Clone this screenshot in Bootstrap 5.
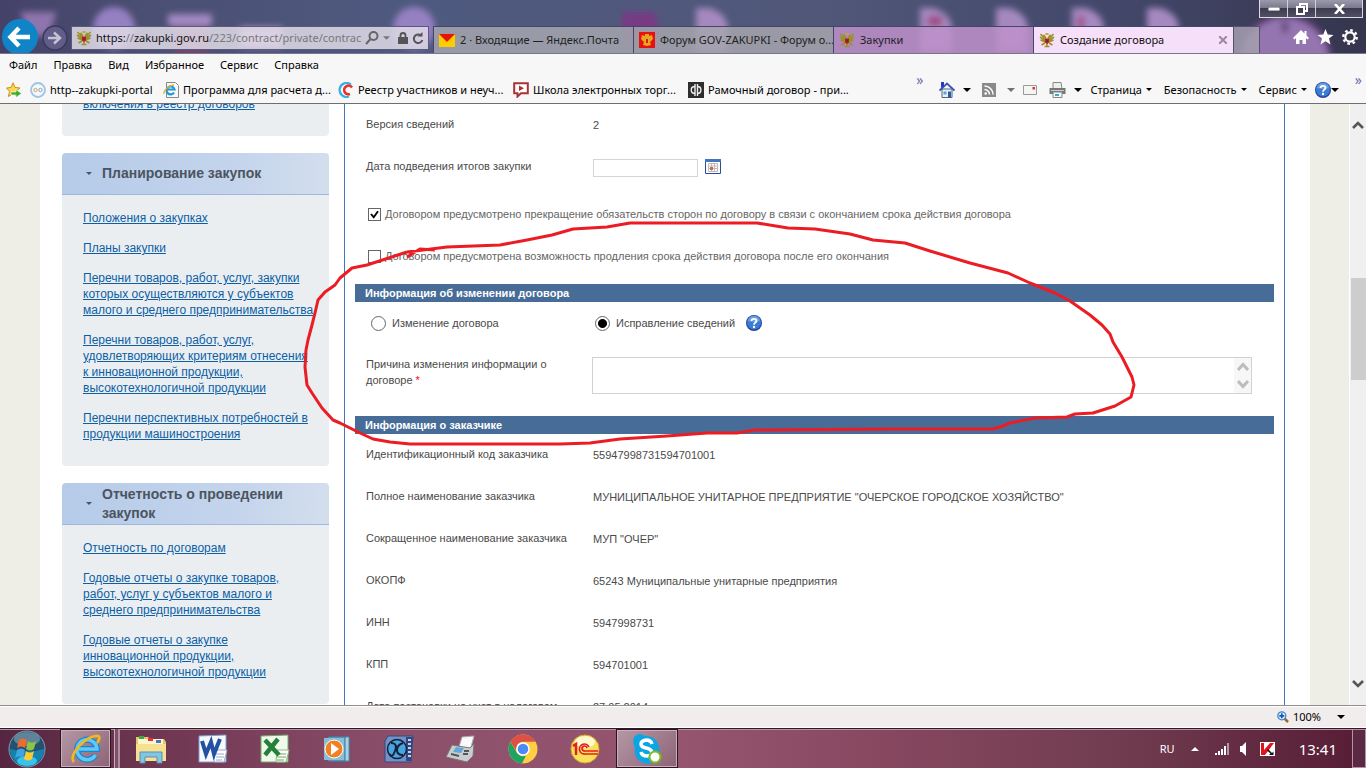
<!DOCTYPE html>
<html lang="ru">
<head>
<meta charset="utf-8">
<meta name="viewport" content="width=device-width, initial-scale=1">
<title>Создание договора</title>
<link href="https://cdn.jsdelivr.net/npm/bootstrap@5.3.0/dist/css/bootstrap.min.css" rel="stylesheet">
<style>
:root{--ui:"Noto Sans","Open Sans",sans-serif;--doc:"Liberation Sans",Arial,sans-serif}
body{font:11px/16px var(--ui);color:#000;background:#fff}
button{font:inherit;color:inherit;background:none;border:0;padding:0}
svg{display:block;flex:none}
.gap-after{margin-right:11px}
.gap-before{margin-left:11px}
/* title bar */
.titlebar{height:54px;background:linear-gradient(90deg,#45426a 0,#4a4e72 10%,#4f5a80 30%,#505779 60%,#44496c 80%,#35354d 100%);border-bottom:1px solid #77768f;overflow:hidden}
.blobs{inset:0;width:100%;height:54px}
.nav-back{margin-left:2px;width:36px;height:34px}
.nav-fwd{width:26px;height:30px;margin-left:4px}
.addr{width:358px;height:24px;margin:0 4px 3px 3px;background:rgba(224,220,232,.85);border:1px solid #5b5a7d;padding:0 4px;gap:4px;color:#777}
.addr .url{width:266px;white-space:nowrap}
.addr .url b{font-weight:400;color:#111}
.tabs{height:27px}
.tab-item{width:200px;border:1px solid #45456a;border-bottom:0;border-right:0;background:rgba(166,166,174,.85);color:#222;padding:0 8px 0 5px;gap:5px;white-space:nowrap}
.tab-item.violet{background:rgba(190,144,202,.85)}
.tab-item.current{background:#f6dff8;color:#111;padding-right:6px}
.tab-new{width:27px;background:rgba(165,160,175,.85);border:1px solid #55526f;border-bottom:0}
.winbtns{top:0;right:3px;border:1px solid #dcdbe4;border-top:0;height:18px;background:linear-gradient(#9b99ac,#7b7a8d 45%,#3e3b4f 50%,#525066)}
.winbtns button{width:28px;border-right:1px solid #cfcfda;display:flex;align-items:center;justify-content:center}
.winbtns button:last-child{width:46px;border:0}
.tools{gap:8px;height:32px;margin-right:8px}
/* menus */
.chrome-bars{background:#f7f7f7;border-bottom:1px solid #6f6f73;height:50px}
.menubar{height:22px;padding-left:9px;gap:16px}
.favbar{height:27px;padding-left:6px}
.fav{width:175px;gap:4px;color:#000;text-decoration:none;white-space:nowrap}
.fav.first{width:133px}
.chev{font-size:14px;line-height:8px;color:#6e6ea8;align-self:flex-start}
.cmds{white-space:nowrap;height:27px}
/* page */
.viewport{min-height:0;background:#eeeee6;font-family:var(--doc)}
.sheet{background:#fff;margin-left:40px;margin-right:39px;padding-left:22px;padding-right:25px}
.side{width:267px;margin-right:15px}
.side-top{margin-top:-8px}
.side-body{background:#ebeef1;padding:15px 0 24px 21px;border-radius:0 0 4px 4px;margin-bottom:17px;display:flex;flex-direction:column;gap:14px;font-size:12px;white-space:nowrap}
.side-top .side-body{padding-top:0}
.side-body a{color:#0b5fa5}
.side-head{height:42px;border-bottom:1px solid #9db7dd;border-radius:4px 4px 0 0;background:linear-gradient(90deg,#b5cbe9,#c4d4ec 65%,#d3deed);padding-left:24px;color:#4b5560}
.side-head h2{font:bold 14px/19px var(--doc);margin:0 0 0 10px}
.form-pane{border:solid #4576b5;border-width:0 1px;padding:0 10px;font-size:11px;color:#4a4a4a}
.f-row{min-height:42px;padding:12px 22px 0 11px}
.f-row>:first-child{width:227px;flex:none;padding-right:20px}
.f-row output{margin-top:1px}
.f-row.reason{min-height:72px}
.star{color:#f00}
.sect{background:#486c98;color:#fff;font:bold 11px/18px var(--doc);margin:0;padding-left:10px}
.f-check{height:42px;padding:10px 0 0 13px;color:#666}
.checks{padding-bottom:12px}
.form-check-input.box{width:13px;height:13px;margin:0 4px 0 0;border:1px solid #666;border-radius:0;background-color:#fff;flex:none}
.form-check-input.box:checked{background-color:#fff;background-size:11px;background-image:url("data:image/svg+xml,%3Csvg xmlns='http://www.w3.org/2000/svg' viewBox='0 0 11 11'%3E%3Cpath d='M2 5l2.700 3.300L9 2.300' fill='none' stroke='%23000' stroke-width='1.900'/%3E%3C/svg%3E")}
.form-check-input.dot{width:15px;height:15px;margin:0 6px 0 0;border:1px solid #666;background-color:#fff;flex:none}
.form-check-input.dot:checked{background-color:#fff;background-image:radial-gradient(circle,#000 0 4px,transparent 5px)}
.radios{height:42px;padding-left:16px}
.radios>:first-child{width:224px}
.date{width:105px;height:18px;border:1px solid #d5d5d5;margin:1px 7px 0 0;padding:0}
.reason-box{border:1px solid #d2d2d2;height:37px;margin:1px 0 0 -1px}
.reason-box textarea{border:0;resize:none;padding:2px;outline:0;overflow:hidden}
.mini-scroll{width:17px;background:#f7f7f7}
.scroll{width:17px;background:#f0f0f0;border-left:1px solid #fff;padding:16px 0}
.thumb{background:#cdcdcd;height:102px;width:15px;margin-top:149px}
.mark-up{left:0;top:0;pointer-events:none}
/* bottom bars */
.statusbar{height:23px;background:#f0edec;border-top:1px solid #8f8f8f;border-bottom:1px solid #fff;box-shadow:inset 0 1px #fff;padding-right:21px}
.taskbar{height:40px;border-top:1px solid #35172a;box-shadow:inset 0 1px #b892a6;background:linear-gradient(90deg,#562640,#743a55 14%,#8c506b 30%,#96556f 50%,#86475f 65%,#713c50 82%,#561c35)}
.task{width:62px;display:flex;align-items:center;justify-content:center}
.task.start{width:58px;padding-right:4px}
.task.on{border:1px solid #2d1422;box-shadow:inset 0 0 0 1px #c9afbd;background:linear-gradient(135deg,#b598a6,#8d6375)}
.task.on.stack{width:51px;margin:0 3px 0 2px}
.stack-edge{width:6px;border-left:1px solid #c9afbd;border-right:2px solid #b18d9f;background:#7d5266}
.tray{color:#fff;margin-right:15px}
.clock{font-size:15px}
.peek{width:14px;border:1px solid #b592a4;background:#5b2a42}
</style>
</head>
<body class="vh-100 overflow-hidden d-flex flex-column">
<svg width="0" height="0" class="position-absolute" aria-hidden="true">
 <symbol id="eagle" viewBox="0 0 16 16"><g fill="none" stroke="#9a9128" stroke-width="1.600"><path d="M7 8L1.500 2M6.500 9L1 5M6.500 10L1.500 8M9 8l5.500-6M9.500 9L15 5M9.500 10l5-2M6 11l-3.500 2M10 11l3.500 2M8 11v4M5.500 14.500h5"/><path d="M7 6L5 3.500 3.800 5M9 6l2-2.500L12.200 5"/></g><path d="M6.500 1h3v2h-3z" fill="#c4aa2a"/><path d="M6 6.500h4v4L8 12l-2-1.500z" fill="#c01c1c"/><path d="M7.500 7.500H9V10H7.500z" fill="#5a2b4b"/></symbol>
 <symbol id="caret" viewBox="0 0 8 4"><path d="M0 0h8L4 4z" fill="currentColor"/></symbol>
 <symbol id="help" viewBox="0 0 16 16"><circle cx="8" cy="8" r="8" fill="#27459b"/><circle cx="8" cy="7.500" r="7" fill="#3b7bd1"/><path d="M2 6a6 5 0 0 1 12 0Q8 8 2 6z" fill="#6a9fe0"/><path d="M5.500 6Q5.500 3.800 8 3.800T10.500 6C10.500 7.500 8 7.700 8 9.700" fill="none" stroke="#fff" stroke-width="1.800"/><circle cx="8" cy="12" r="1.200" fill="#fff"/></symbol>
</svg>

<header class="titlebar position-relative flex-shrink-0">
 <svg class="blobs position-absolute" aria-hidden="true"><defs><filter id="soft"><feGaussianBlur stdDeviation="3"/></filter></defs><g filter="url(#soft)">
  <path d="M20 12h36q-4 20-12 24H30z" fill="#8f74ad"/><circle cx="114" cy="28" r="21" fill="#9580c2"/><path d="M168 14h44v12h-44z" fill="#a389c2"/><path d="M174 26h34v28h-34z" fill="#7b456c"/><path d="M240 27h42v20h-42z" fill="#b895cd"/><circle cx="414" cy="28" r="21" fill="#9580c2"/>
  <path d="M622 12h32l4 10v16h-36z" fill="#773b84"/><path d="M696 8h14q18 6 18 22v22h-32zM920 8h14q18 6 18 22v22h-32zM996 8h14q18 6 18 22v22h-32zM1072 8h14q18 6 18 22v22h-32zM1147 8h14q18 6 18 22v22h-32z" fill="#a588bf"/><path d="M928 16h14v10h-14zM1078 16h6v20h-6z" fill="#a04683"/>
  <circle cx="1285" cy="62" r="46" fill="#9474b0" stroke="#5c3870" stroke-width="4"/><path d="M1282 22h6v10h-6zM1245 34l8 8M1260 30l8 6z" fill="#57416b"/></g></svg>
 <div class="position-relative d-flex align-items-end h-100">
  <button class="nav-back" aria-label="Назад"><svg width="36" height="34" viewBox="0 0 36 34"><circle cx="18" cy="18" r="18" fill="#0f85c8"/><path d="M17 9l-8.500 9L17 27M9 18h19" fill="none" stroke="#fff" stroke-width="4.500"/></svg></button>
  <button class="nav-fwd" aria-label="Вперёд"><svg width="26" height="26" viewBox="0 0 26 26"><circle cx="13" cy="13" r="12" fill="#625c88" stroke="#39385b" stroke-width="1.500"/><path d="M12 7.500l6 5.500-6 5.500M18 13H6" fill="none" stroke="#c5c2d4" stroke-width="2.500"/></svg></button>
  <div class="addr d-flex align-items-center"><svg width="16" height="16"><use href="#eagle"/></svg><div class="url" role="textbox" aria-label="Адрес"><b>https:</b>//<b>zakupki.gov.ru</b>/223/contract/private/contrac</div>
   <svg width="14" height="14" viewBox="0 0 14 14" fill="none" stroke="#666" stroke-width="2"><circle cx="8.500" cy="5" r="4"/><path d="M5.500 8L1 13"/></svg><svg width="7" height="4"><use href="#caret"/></svg>
   <svg class="ms-1" width="10" height="13" viewBox="0 0 10 13"><path d="M0 5h10v7H0z" fill="#555"/><path d="M2.500 6V3.500a2.500 2.500 0 0 1 5 0V6" fill="none" stroke="#555" stroke-width="1.800"/></svg><svg width="12" height="13" viewBox="0 0 12 13"><path d="M9 3.500A4.300 4.300 0 1 0 10.300 8" fill="none" stroke="#555" stroke-width="2"/><path d="M5.500 4.500h5V0z" fill="#555"/></svg></div>
  <nav class="tabs d-flex">
   <button class="tab-item d-flex align-items-center"><svg width="16" height="13" viewBox="0 0 16 13"><path d="M0 0h16v13H0z" fill="#fc0"/><path d="M0 0h16L8 8z" fill="#e61400"/></svg>2 · Входящие — Яндекс.Почта</button>
   <button class="tab-item d-flex align-items-center"><svg width="16" height="16" viewBox="0 0 16 16"><path d="M0 0h16v16H0z" fill="#e81010"/><path d="M6 2h4v2l3-1 1 4-3 3 1 3-4 1-4-1 1-3-3-3 1-4 3 1z" fill="#e8a520"/><path d="M7 7h2v4H7z" fill="#c21"/></svg>Форум GOV-ZAKUPKI - Форум о...</button>
   <button class="tab-item violet d-flex align-items-center"><svg width="16" height="16"><use href="#eagle"/></svg>Закупки</button>
   <button class="tab-item current d-flex align-items-center"><svg width="16" height="16"><use href="#eagle"/></svg>Создание договора<svg class="ms-auto" width="8" height="8" viewBox="0 0 8 8"><path d="M0 0l8 8M8 0L0 8" stroke="#998aa0" stroke-width="2"/></svg></button>
   <button class="tab-new" aria-label="Новая вкладка"></button>
  </nav>
  <div class="tools d-flex align-items-center ms-auto">
   <svg width="16" height="16" viewBox="0 0 16 16" fill="#fff"><path d="M8 1L0 9l1.500 1.500L3 9v6h3.500v-4h3v4H13V9l1.500 1.500L16 9l-2.500-2.500V2h-2v2.500z"/></svg>
   <svg width="17" height="16" viewBox="0 0 16 16" fill="#fff"><path d="M8 0l2.200 5.500 5.800.4-4.500 3.700L13 15.500 8 12.300 3 15.500l1.500-5.900L0 5.900l5.800-.4z"/></svg>
   <svg width="16" height="16" viewBox="0 0 16 16" fill="none" stroke="#fff"><circle cx="8" cy="8" r="4.700" stroke-width="2.200"/><circle cx="8" cy="8" r="6.700" stroke-width="2.400" stroke-dasharray="2.600 2.660"/></svg>
  </div>
 </div>
 <div class="winbtns position-absolute d-flex">
  <button aria-label="Свернуть"><svg width="12" height="4"><path d="M0 0h12v4H0z" fill="#fff" stroke="#556"/></svg></button>
  <button aria-label="Развернуть"><svg width="12" height="12" viewBox="0 0 12 12" fill="none" stroke="#fff" stroke-width="2"><path d="M4 3V1h7v7H9M1 4h7v7H1z"/></svg></button>
  <button aria-label="Закрыть"><svg width="11" height="10" viewBox="0 0 11 10"><path d="M1 0l9 10M10 0L1 10" stroke="#fff" stroke-width="2.600"/></svg></button>
 </div>
</header>

<div class="chrome-bars flex-shrink-0">
 <nav class="menubar d-flex align-items-center"><button>Файл</button><button>Правка</button><button>Вид</button><button>Избранное</button><button>Сервис</button><button>Справка</button></nav>
 <div class="favbar d-flex align-items-center">
  <svg class="me-2" width="16" height="16" viewBox="0 0 16 16"><path d="M7 .8l2 4.700 5 .5-3.800 3.300 1.300 5L7 11.800l-4.700 2.700 1.300-5L.5 6l4.500-.5z" fill="#ffd84a" stroke="#c8901c"/><path d="M5 10h5V7.500l5.500 4-5.500 4V13H5z" fill="#3aae33" stroke="#fff" stroke-width=".6"/></svg>
  <a href="#" class="fav first d-flex align-items-center"><svg width="16" height="16" viewBox="0 0 16 16"><circle cx="8" cy="8" r="7" fill="#f4f8fc" stroke="#9dc4e4" stroke-width="1.800"/><circle cx="5.500" cy="8" r="1.700" fill="none" stroke="#c9a968"/><circle cx="10.500" cy="8" r="1.700" fill="none" stroke="#8fa4bd"/></svg>http--zakupki-portal</a>
  <a href="#" class="fav d-flex align-items-center"><svg width="16" height="16" viewBox="0 0 16 16"><path d="M3.500.5h9l3 3v12h-12z" fill="#f8f8f8" stroke="#888"/><path d="M11 10.500A4 4 0 1 1 11.500 7.500H4" fill="none" stroke="#2395da" stroke-width="2.200"/><path d="M1 12C0 9 6 3 11 3" fill="none" stroke="#e6b51e" stroke-width="1.300"/></svg>Программа для расчета д...</a>
  <a href="#" class="fav d-flex align-items-center"><svg width="16" height="16" viewBox="0 0 16 16"><path d="M13 2.500A7 7 0 1 0 11 14.500" fill="none" stroke="#35b0e8" stroke-width="2.200"/><path d="M14 5.500A4.300 4.300 0 1 0 12 12" fill="none" stroke="#e5322d" stroke-width="2.600"/></svg>Реестр участников и неуч...</a>
  <a href="#" class="fav d-flex align-items-center"><svg width="16" height="16" viewBox="0 0 16 16"><path d="M1.200 1.200h13.600v10H8L4.500 14.500v-3.300H1.200z" fill="#fff" stroke="#a93232" stroke-width="2"/><path d="M6 3.500l5 2.800-5 2.800z" fill="#a93232"/></svg>Школа электронных торг...</a>
  <a href="#" class="fav d-flex align-items-center"><svg width="16" height="16" viewBox="0 0 16 16"><path d="M0 0h16v16H0z" fill="#2e2e2e"/><path d="M7 2v12M9.500 2v12M7 4.500C2 4.500 2 11.500 7 11.500M9.500 4.500c4.500 0 4.500 7 0 7" fill="none" stroke="#eee" stroke-width="1.400"/></svg>Рамочный договор - при...</a>
  <div class="cmds d-flex align-items-center ms-auto pe-1">
   <span class="chev me-3">»</span>
   <svg width="16" height="16" viewBox="0 0 16 16"><path d="M3 7h10v8.500H3z" fill="#e8f0f8" stroke="#567"/><path d="M.5 8.500L8 1.500l7.500 7" fill="none" stroke="#3457b5" stroke-width="1.800"/><path d="M2 0h3v4L2 6z" fill="#2a39c8"/><path d="M9 9.500h3v6H9z" fill="#2c5aa8"/><path d="M4.500 9.500h3v3h-3z" fill="#5ba0dc"/></svg>
   <svg class="ms-2 gap-after" width="8" height="4"><use href="#caret"/></svg>
   <svg width="14" height="14" viewBox="0 0 14 14"><path d="M0 0h14v14H0z" fill="#8a8a8a"/><g fill="none" stroke="#fff" stroke-width="1.500"><path d="M2.500 6.500a5 5 0 0 1 5 5M2.500 3a8.500 8.500 0 0 1 8.500 8.500"/></g><circle cx="3.700" cy="10.500" r="1.300" fill="#fff"/></svg>
   <svg class="gap-before me-2 text-secondary" width="8" height="4"><use href="#caret"/></svg>
   <svg class="me-2" width="14" height="10" viewBox="0 0 14 10"><path d="M.5.500h13v9H.5z" fill="#f4f4f4" stroke="#999"/><path d="M9.500 2h2.500v2.500H9.500z" fill="#d33"/></svg>
   <svg class="ms-1" width="17" height="16" viewBox="0 0 17 16"><path d="M4 .5h8l1 6H4z" fill="#eee" stroke="#888"/><path d="M.5 6h16v6H.5z" fill="#777"/><path d="M2 8h13v1H2z" fill="#ccc"/><path d="M4 10h9v5.500H4z" fill="#f5f5f5" stroke="#888"/><path d="M6 12h4v2H6z" fill="#37a8d8"/></svg>
   <svg class="ms-2 me-2" width="8" height="4"><use href="#caret"/></svg>
   <button class="d-flex align-items-center me-2">Страница<svg class="mx-1" width="6" height="3"><use href="#caret"/></svg></button>
   <button class="d-flex align-items-center me-2">Безопасность<svg class="mx-1" width="6" height="3"><use href="#caret"/></svg></button>
   <button class="d-flex align-items-center me-1">Сервис<svg class="mx-1" width="6" height="3"><use href="#caret"/></svg></button>
   <svg width="16" height="16"><use href="#help"/></svg><svg width="8" height="4"><use href="#caret"/></svg>
   <span class="chev ms-3">»</span>
  </div>
 </div>
</div>

<main class="viewport flex-grow-1 d-flex overflow-hidden position-relative">
 <div class="sheet flex-grow-1 d-flex align-items-start overflow-hidden h-100">
  <aside class="side flex-shrink-0">
   <section class="side-top"><div class="side-body"><a href="#">включения в реестр договоров</a></div></section>
   <section><div class="side-head d-flex align-items-center"><svg width="6" height="3"><use href="#caret"/></svg><h2>Планирование закупок</h2></div>
    <div class="side-body"><a href="#">Положения о закупках</a><a href="#">Планы закупки</a><a href="#">Перечни товаров, работ, услуг, закупки<br>которых осуществляются у субъектов<br>малого и среднего предпринимательства</a><a href="#">Перечни товаров, работ, услуг,<br>удовлетворяющих критериям отнесения<br>к инновационной продукции,<br>высокотехнологичной продукции</a><a href="#">Перечни перспективных потребностей в<br>продукции машиностроения</a></div></section>
   <section><div class="side-head d-flex align-items-center"><svg width="6" height="3"><use href="#caret"/></svg><h2>Отчетность о проведении<br>закупок</h2></div>
    <div class="side-body"><a href="#">Отчетность по договорам</a><a href="#">Годовые отчеты о закупке товаров,<br>работ, услуг у субъектов малого и<br>среднего предпринимательства</a><a href="#">Годовые отчеты о закупке<br>инновационной продукции,<br>высокотехнологичной продукции</a></div></section>
  </aside>
  <form class="form-pane flex-grow-1">
   <div class="f-row d-flex"><span>Версия сведений</span><output>2</output></div>
   <div class="f-row d-flex align-items-start"><label for="dt">Дата подведения итогов закупки</label><input id="dt" class="date" type="text"><button type="button" aria-label="Календарь"><svg width="16" height="16" viewBox="0 0 16 16"><path d="M.5 1.500h15v14H.5z" fill="#fff" stroke="#2b4a9a"/><path d="M0 1h16v3H0z" fill="#4574bd"/><path d="M3.500 5.500h9v8h-9zM3.500 8h9M3.500 10.500h9M6.500 5v8M9.500 5v8" fill="none" stroke="#bbb"/><path d="M5 9h3v3H5z" fill="#d0694a"/></svg></button></div>
   <div class="checks">
    <div class="f-check d-flex align-items-center"><input class="form-check-input box" type="checkbox" id="c1" checked><label for="c1">Договором предусмотрено прекращение обязательств сторон по договору в связи с окончанием срока действия договора</label></div>
    <div class="f-check d-flex align-items-center"><input class="form-check-input box" type="checkbox" id="c2"><label for="c2">Договором предусмотрена возможность продления срока действия договора после его окончания</label></div>
   </div>
   <h3 class="sect">Информация об изменении договора</h3>
   <div class="radios d-flex align-items-center"><div class="d-flex align-items-center"><input class="form-check-input dot" type="radio" name="kind" id="r1"><label for="r1">Изменение договора</label></div><div class="d-flex align-items-center"><input class="form-check-input dot" type="radio" name="kind" id="r2" checked><label for="r2">Исправление сведений</label></div><svg class="gap-before" width="16" height="16"><use href="#help"/></svg></div>
   <div class="f-row reason d-flex align-items-start"><label for="why">Причина изменения информации о договоре <span class="star">*</span></label>
    <div class="reason-box d-flex flex-grow-1"><textarea id="why" class="flex-grow-1"></textarea><div class="mini-scroll d-flex flex-column align-items-center justify-content-between py-1"><svg width="12" height="9" viewBox="0 0 12 9"><path d="M1 8l5-5.500L11 8" fill="none" stroke="#bdbdbd" stroke-width="3"/></svg><svg width="12" height="9" viewBox="0 0 12 9"><path d="M1 1l5 5.500L11 1" fill="none" stroke="#bdbdbd" stroke-width="3"/></svg></div></div></div>
   <h3 class="sect">Информация о заказчике</h3>
   <div class="f-row d-flex"><span>Идентификационный код заказчика</span><output>55947998731594701001</output></div>
   <div class="f-row d-flex"><span>Полное наименование заказчика</span><output>МУНИЦИПАЛЬНОЕ УНИТАРНОЕ ПРЕДПРИЯТИЕ "ОЧЕРСКОЕ ГОРОДСКОЕ ХОЗЯЙСТВО"</output></div>
   <div class="f-row d-flex"><span class="text-nowrap">Сокращенное наименование заказчика</span><output>МУП "ОЧЕР"</output></div>
   <div class="f-row d-flex"><span>ОКОПФ</span><output>65243 Муниципальные унитарные предприятия</output></div>
   <div class="f-row d-flex"><span>ИНН</span><output>5947998731</output></div>
   <div class="f-row d-flex"><span>КПП</span><output>594701001</output></div>
   <div class="f-row d-flex"><span>Дата постановки на учет в налоговом</span><output>27.05.2014</output></div>
  </form>
 </div>
 <div class="scroll flex-shrink-0 d-flex flex-column align-items-center"><svg width="12" height="9" viewBox="0 0 12 9"><path d="M1 8l5-5 5 5" fill="none" stroke="#555" stroke-width="2.600"/></svg><div class="thumb"></div><svg class="mt-auto" width="12" height="9" viewBox="0 0 12 9"><path d="M1 1l5 5 5-5" fill="none" stroke="#555" stroke-width="2.600"/></svg></div>
 <svg class="mark-up position-absolute" width="1150" height="350" viewBox="0 104 1150 350" fill="none" stroke="#ec1c24" stroke-width="3" stroke-linejoin="round"><path d="M407 257L420 249 435 250M407 252L447 247 500 245 527 240 552 235 573 229 607 227 630 223 757 223 788 228 815 229 850 234 873 240 905 243 930 251 970 263 1008 273 1030 283 1055 293 1070 301 1090 315 1102 325 1110 334 1113 342 1122 357 1132 377 1134 385 1131 397 1115 406 1093 413 1075 414 1067 417 1035 418 1010 423 1003 426 993 429 890 429 755 430 737 433 707 433 667 436 620 439 590 443 560 444 410 444 390 442 373 439 360 433 340 423 333 420 322 408 312 393 307 385 305 367 306 350 308 340 312 325 315 313 318 300 325 292 335 285 340 278 352 268 367 265 407 252"/></svg>
</main>

<footer class="flex-shrink-0">
 <div class="statusbar d-flex align-items-center justify-content-end"><svg class="me-1" width="12" height="12" viewBox="0 0 12 12"><path d="M7 7l4 4" stroke="#a0672c" stroke-width="2.500"/><circle cx="4.800" cy="4.800" r="4" fill="#dff0ff" stroke="#3f88cf" stroke-width="1.300"/><path d="M4.800 2.300v5M2.300 4.800h5" stroke="#1757b0" stroke-width="1.700"/></svg>100%<svg class="ms-3" width="8" height="4"><use href="#caret"/></svg></div>
 <nav class="taskbar d-flex align-items-stretch">
  <button class="task start" aria-label="Пуск"><svg width="38" height="38" viewBox="-4 0 38 38"><circle cx="15" cy="19" r="18" fill="#25516f" stroke="#7aa1b6"/><path d="M-2 19a17 17 0 0 0 34 0q-17 5-34 0z" fill="#1581b0"/><ellipse cx="15" cy="31" rx="10" ry="5" fill="#37c4ea"/><ellipse cx="15" cy="9" rx="13" ry="7" fill="#7898aa" opacity=".7"/><path d="M7 10q4-3 8 0l-2 8q-4-3-8 0z" fill="#ef6a2d"/><path d="M16 11q4 3 8 0l-2 8q-4 3-8 0z" fill="#8cc541"/><path d="M5 20q4-3 8 0l-2 8q-4-3-8 0z" fill="#3fa3e0"/><path d="M14 21q4 3 8 0l-2 8q-4 3-8 0z" fill="#fdcb2f"/></svg></button>
  <button class="task on stack" aria-label="Internet Explorer"><svg width="32" height="32" viewBox="0 0 32 32"><path d="M25.500 22A10 10 0 1 1 27 16H8" fill="none" stroke="#1687cf" stroke-width="6"/><path d="M25.500 22A10 10 0 1 1 27 16H8" fill="none" stroke="#5fc8f5" stroke-width="3.500"/><path d="M4 29C-3 22 18 1 28 3c3 1 0 6-1 7" fill="none" stroke="#f2b91c" stroke-width="2.600"/></svg></button><span class="stack-edge"></span>
  <button class="task" aria-label="Проводник"><svg width="32" height="30" viewBox="0 0 32 30"><path d="M1 3h12l2 2h14l2 3v19H1z" fill="#e4c56b"/><path d="M3 5h25v8H3z" fill="#fff5c8"/><path d="M4 2h5v3H4z" fill="#3aa84a"/><path d="M13 4h5v3h-5z" fill="#d34"/><path d="M21 6h5v3h-5z" fill="#47c"/><path d="M1 10h30v17H1z" fill="#f6e193"/><path d="M5 29V18h22v11h-5v-6H10v6z" fill="#83c5e2" stroke="#5593b5"/></svg></button>
  <button class="task" aria-label="Word"><svg width="30" height="30" viewBox="0 0 30 30"><path d="M1 2l27-1v27H1z" fill="#f5f9ff" stroke="#7fa0cf"/><path d="M17 16h12l-3 12H16z" fill="#fff" stroke="#98a9c5"/><path d="M18 20h8M18 23h8M18 26h6" stroke="#8eaad5"/><path d="M4 7l4 13 5-12 3 12 6-15" fill="none" stroke="#24519f" stroke-width="4"/></svg></button>
  <button class="task" aria-label="Excel"><svg width="30" height="30" viewBox="0 0 30 30"><path d="M1 2l27-1v27H1z" fill="#eff9eb" stroke="#73a967"/><path d="M17 16h12l-3 12H16z" fill="#fff" stroke="#8bb880"/><path d="M17 20h9M17 23h9M17 26h7" stroke="#69a65a"/><path d="M5 6l14 15M18 5L5 21" stroke="#25803b" stroke-width="4.500"/></svg></button>
  <button class="task" aria-label="Проигрыватель"><svg width="28" height="26" viewBox="0 0 28 26"><path d="M8 1h18v24H8z" fill="#a4d4ea" stroke="#4c8cab"/><path d="M5 1h17v24H5z" fill="#72aac8" stroke="#3c7898"/><path d="M1 2h20v22H1z" fill="#8bbcd5"/><circle cx="11" cy="13" r="9" fill="#f08021" stroke="#fff"/><path d="M8 7l8 6-8 6z" fill="#fff"/></svg></button>
  <button class="task" aria-label="Медиаплеер"><svg width="30" height="28" viewBox="0 0 30 28"><path d="M4 1h25l-2 26H1V6z" fill="#7391c8" stroke="#334a7b"/><path d="M22 2h7l-2 24h-5z" fill="#334680"/><path d="M24 5h3M24 9h3M24 13h3M24 17h3M24 21h3" stroke="#bfd2f0" stroke-width="2"/><circle cx="13" cy="14" r="9.500" fill="#48a6df" stroke="#172039" stroke-width="1.500"/><path d="M7 8q7 0 4 8t-5 3M19 8q-6 2-6 7t6 5" fill="none" stroke="#172039" stroke-width="2"/></svg></button>
  <button class="task" aria-label="Факс"><svg width="32" height="28" viewBox="0 0 32 28"><path d="M17 2l12-1-4 15-12-1z" fill="#fafafa" stroke="#aaa"/><path d="M7 10l18 3 4-4-1 12-6 6L1 22z" fill="#c9cdd0" stroke="#777"/><path d="M11 12l8 1-3 5-8-1z" fill="#61a7da"/><path d="M19 16h5M18 19h5M6 19l8 2" stroke="#555" stroke-width="2"/></svg></button>
  <button class="task" aria-label="Chrome"><svg width="30" height="30" viewBox="0 0 30 30"><circle cx="15" cy="15" r="14.500" fill="#ffce42"/><path d="M2.400 7.800A14.500 14.500 0 0 1 27.600 7.800H15A7 7 0 0 0 9 18z" fill="#dd5144"/><path d="M2.400 7.800L9 19a7 7 0 0 0 9 2.500L14 29.500A14.500 14.500 0 0 1 2.400 7.800z" fill="#1da462"/><circle cx="15" cy="15" r="6.800" fill="#fff"/><circle cx="15" cy="15" r="5.300" fill="#4c8bf5"/></svg></button>
  <button class="task" aria-label="1С"><svg width="30" height="30" viewBox="0 0 30 30"><circle cx="15" cy="15" r="14" fill="#f9e05b" stroke="#d6a92d"/><ellipse cx="15" cy="8" rx="10" ry="6" fill="#fff9cf"/><g fill="none" stroke="#e31e24" stroke-width="2.500"><path d="M3 12l3-2v11"/><path d="M19 13a5 5 0 1 0-4 7h13M17 14a2.500 2.500 0 1 0-2 3h13" stroke-width="1.700"/></g></svg></button>
  <button class="task on" aria-label="Skype"><svg width="32" height="32" viewBox="0 0 32 32"><path d="M8 1q4 0 6 2a13 13 0 0 1 14 15q3 4 1 8t-8 4a13 13 0 0 1-17-15Q-1 3 8 1z" fill="#0ba5e6"/><path d="M21 11q-1-4-6-4-5 1-5 4t5 4 6 4-5 4q-5 0-6-4" fill="none" stroke="#fff" stroke-width="3.500"/><circle cx="24" cy="24" r="5.500" fill="#fff" stroke="#7fba24" stroke-width="2"/></svg></button>
  <div class="tray ms-auto d-flex align-items-center"><span class="me-3">RU</span><svg class="me-3" width="8" height="4" viewBox="0 0 8 4"><path d="M0 4h8L4 0z" fill="#fff"/></svg>
   <svg class="gap-after" width="14" height="12" viewBox="0 0 14 12" fill="#fff"><path d="M0 10h2v2H0zM3 8h2v4H3zM6 6h2v6H6zM9 3h2v9H9z"/><path d="M12 0h2v12h-2z" opacity=".5"/></svg>
   <svg class="me-2" width="8" height="14" viewBox="0 0 8 14" fill="#fff"><path d="M0 4h2l4-4v14l-4-4H0z"/></svg>
   <svg class="ms-1" width="15" height="14" viewBox="0 0 15 14"><path d="M0 0h15v14H0z" fill="#fff"/><path d="M1 1h3v7l6-7h4L5 13H1z" fill="#e1141e"/><path d="M8 7l4 4 1.500-1.500V13H9l1.500-1.500L7 8.500z" fill="#111"/></svg>
   <span class="clock ms-4">13:41</span></div>
  <button class="peek" aria-label="Показать рабочий стол"></button>
 </nav>
</footer>
<script src="https://cdn.jsdelivr.net/npm/bootstrap@5.3.0/dist/js/bootstrap.bundle.min.js"></script>
</body>
</html>
